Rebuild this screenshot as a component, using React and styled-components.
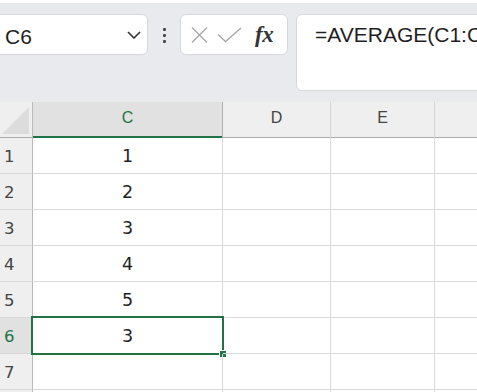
import React from "react";
import styled, { createGlobalStyle } from "styled-components";

const GREEN = "#217346";

const Global = createGlobalStyle`
  html, body { margin: 0; padding: 0; }
  body {
    background: #e8eaee;
    overflow: hidden;
    font-family: "Liberation Sans", Arial, sans-serif;
    width: 477px;
    height: 392px;
  }
`;

const Page = styled.div`
  width: 477px;
  height: 392px;
  overflow: hidden;
  display: flex;
  flex-direction: column;
`;

const TopStrip = styled.div`
  flex-shrink: 0;
  height: 3px;
  margin: 0 -4px;
  background: #ffffff;
  border-radius: 0 0 5px 5px;
  box-shadow: 0 1px 2px rgba(0, 0, 0, 0.18);
`;

const Toolbar = styled.div`
  flex-shrink: 0;
  height: 99px;
  box-sizing: border-box;
  padding-top: 11px;
  display: flex;
  align-items: flex-start;
  background: #e8eaee;
`;

const NameBox = styled.div`
  margin-left: -10px;
  width: 158px;
  height: 41px;
  box-sizing: border-box;
  background: #fff;
  border: 1px solid #d6d8dc;
  border-radius: 6px;
  display: flex;
  align-items: center;
  justify-content: space-between;
  padding: 0 6px 0 14px;
`;

const NameText = styled.span`
  font-size: 21px;
  line-height: 24px;
  padding-top: 5px;
  color: #1f1f1f;
`;

const MoreDots = styled.div`
  width: 32px;
  height: 41px;
  display: flex;
  flex-direction: column;
  align-items: center;
  padding-top: 14px;
  box-sizing: border-box;
  gap: 3px;
`;

const Dot = styled.span`
  width: 3px;
  height: 3px;
  border-radius: 1px;
  background: #4a4a4a;
`;

const FxButtons = styled.div`
  width: 108px;
  height: 41px;
  box-sizing: border-box;
  background: #fff;
  border: 1px solid #d6d8dc;
  border-radius: 6px;
  display: flex;
  align-items: center;
  padding-left: 8px;
`;

const IconSlot = styled.span`
  display: flex;
  align-items: center;
  justify-content: center;
  width: ${(p) => p.$w}px;
  height: 24px;
`;

const FxLabel = styled.span`
  font-family: "Liberation Serif", "Times New Roman", serif;
  font-style: italic;
  font-weight: bold;
  font-size: 23px;
  color: #333;
  line-height: 24px;
  margin-left: 8px;
  letter-spacing: -0.5px;
`;

const FormulaBar = styled.div`
  margin-left: 8px;
  margin-right: -12px;
  flex: 1;
  height: 77px;
  box-sizing: border-box;
  background: #fff;
  border: 1px solid #d6d8dc;
  border-radius: 6px;
  padding: 8px 0 0 18px;
  font-size: 21px;
  line-height: 24px;
  color: #1f1f1f;
  white-space: nowrap;
  overflow: hidden;
`;

const Sheet = styled.div`
  flex-shrink: 0;
  display: grid;
  grid-template-columns: 33px 190px 108px 104px 60px;
  grid-auto-rows: 36px;
  background: #fff;
`;

const Corner = styled.div`
  position: relative;
  background: #efefef;
  border-right: 1px solid #b9b9b9;
  box-shadow: inset 0 -1px 0 #ababab;
`;

const CornerTriangle = styled.div`
  position: absolute;
  left: 2px;
  top: 5px;
  width: 27px;
  height: 27px;
  background: #dcdcdc;
  clip-path: polygon(0 100%, 100% 0, 100% 100%);
`;

const ColHeader = styled.div`
  box-sizing: border-box;
  background: ${(p) => (p.$active ? "#e1e1e1" : "#efefef")};
  color: ${(p) => (p.$active ? GREEN : "#444")};
  border-right: 1px solid ${(p) => (p.$active ? "#b0b0b0" : "#d4d4d4")};
  box-shadow: inset 0 ${(p) => (p.$active ? "-2px" : "-1px")} 0
    ${(p) => (p.$active ? GREEN : "#ababab")};
  font-size: 16px;
  display: flex;
  justify-content: center;
  padding-top: 7px;
`;

const RowHeader = styled.div`
  box-sizing: border-box;
  background: ${(p) => (p.$active ? "#e1e1e1" : "#efefef")};
  color: ${(p) => (p.$active ? GREEN : "#444")};
  border-right: 1px solid #b9b9b9;
  border-bottom: 1px solid #d8d8d8;
  font-family: "DejaVu Sans", sans-serif;
  font-size: 16.5px;
  display: flex;
  align-items: center;
  padding: 1px 0 0 4px;
`;

const Cell = styled.div`
  position: relative;
  box-sizing: border-box;
  border-right: 1px solid #dadada;
  border-bottom: 1px solid #dadada;
  font-family: "DejaVu Sans", sans-serif;
  font-size: 17.5px;
  color: #1f1f1f;
  display: flex;
  align-items: center;
  justify-content: center;
  padding-top: 1px;
`;

const Selection = styled.div`
  position: absolute;
  left: -2px;
  top: -2px;
  right: -2px;
  bottom: -2px;
  border: 2px solid ${GREEN};
  pointer-events: none;
`;

const FillHandle = styled.span`
  position: absolute;
  right: -5px;
  bottom: -5px;
  width: 6px;
  height: 6px;
  background: ${GREEN};
  border: 1px solid #fff;
`;

const XIcon = () => (
  <svg width="20" height="18" viewBox="0 0 20 18">
    <path d="M2 1.5 L17 16.5 M17 1.5 L2 16.5" stroke="#a8a8a8" strokeWidth="1.4" fill="none" />
  </svg>
);

const CheckIcon = () => (
  <svg width="25" height="16" viewBox="0 0 25 16">
    <path d="M1 7.5 L8.5 14.5 L24 1" stroke="#a8a8a8" strokeWidth="1.4" fill="none" />
  </svg>
);

const Chevron = () => (
  <svg width="14" height="8" viewBox="0 0 14 8">
    <path d="M1 1 L7 7 L13 1" stroke="#333" strokeWidth="1.6" fill="none" />
  </svg>
);

const cols = ["C", "D", "E", ""];
const values = ["1", "2", "3", "4", "5", "3", "", ""];

export default function App() {
  return (
    <Page>
      <Global />
      <TopStrip />
      <Toolbar>
        <NameBox>
          <NameText>C6</NameText>
          <Chevron />
        </NameBox>
        <MoreDots>
          <Dot />
          <Dot />
          <Dot />
        </MoreDots>
        <FxButtons>
          <IconSlot $w={22}>
            <XIcon />
          </IconSlot>
          <IconSlot $w={36}>
            <CheckIcon />
          </IconSlot>
          <FxLabel>fx</FxLabel>
        </FxButtons>
        <FormulaBar>=AVERAGE(C1:C6)</FormulaBar>
      </Toolbar>
      <Sheet>
        <Corner>
          <CornerTriangle />
        </Corner>
        {cols.map((c, i) => (
          <ColHeader key={i} $active={c === "C"}>
            {c}
          </ColHeader>
        ))}
        {values.map((v, r) => (
          <React.Fragment key={r}>
            <RowHeader $active={r === 5}>{r < 7 ? r + 1 : ""}</RowHeader>
            <Cell>
              {v}
              {r === 5 && (
                <Selection>
                  <FillHandle />
                </Selection>
              )}
            </Cell>
            <Cell />
            <Cell />
            <Cell />
          </React.Fragment>
        ))}
      </Sheet>
    </Page>
  );
}
